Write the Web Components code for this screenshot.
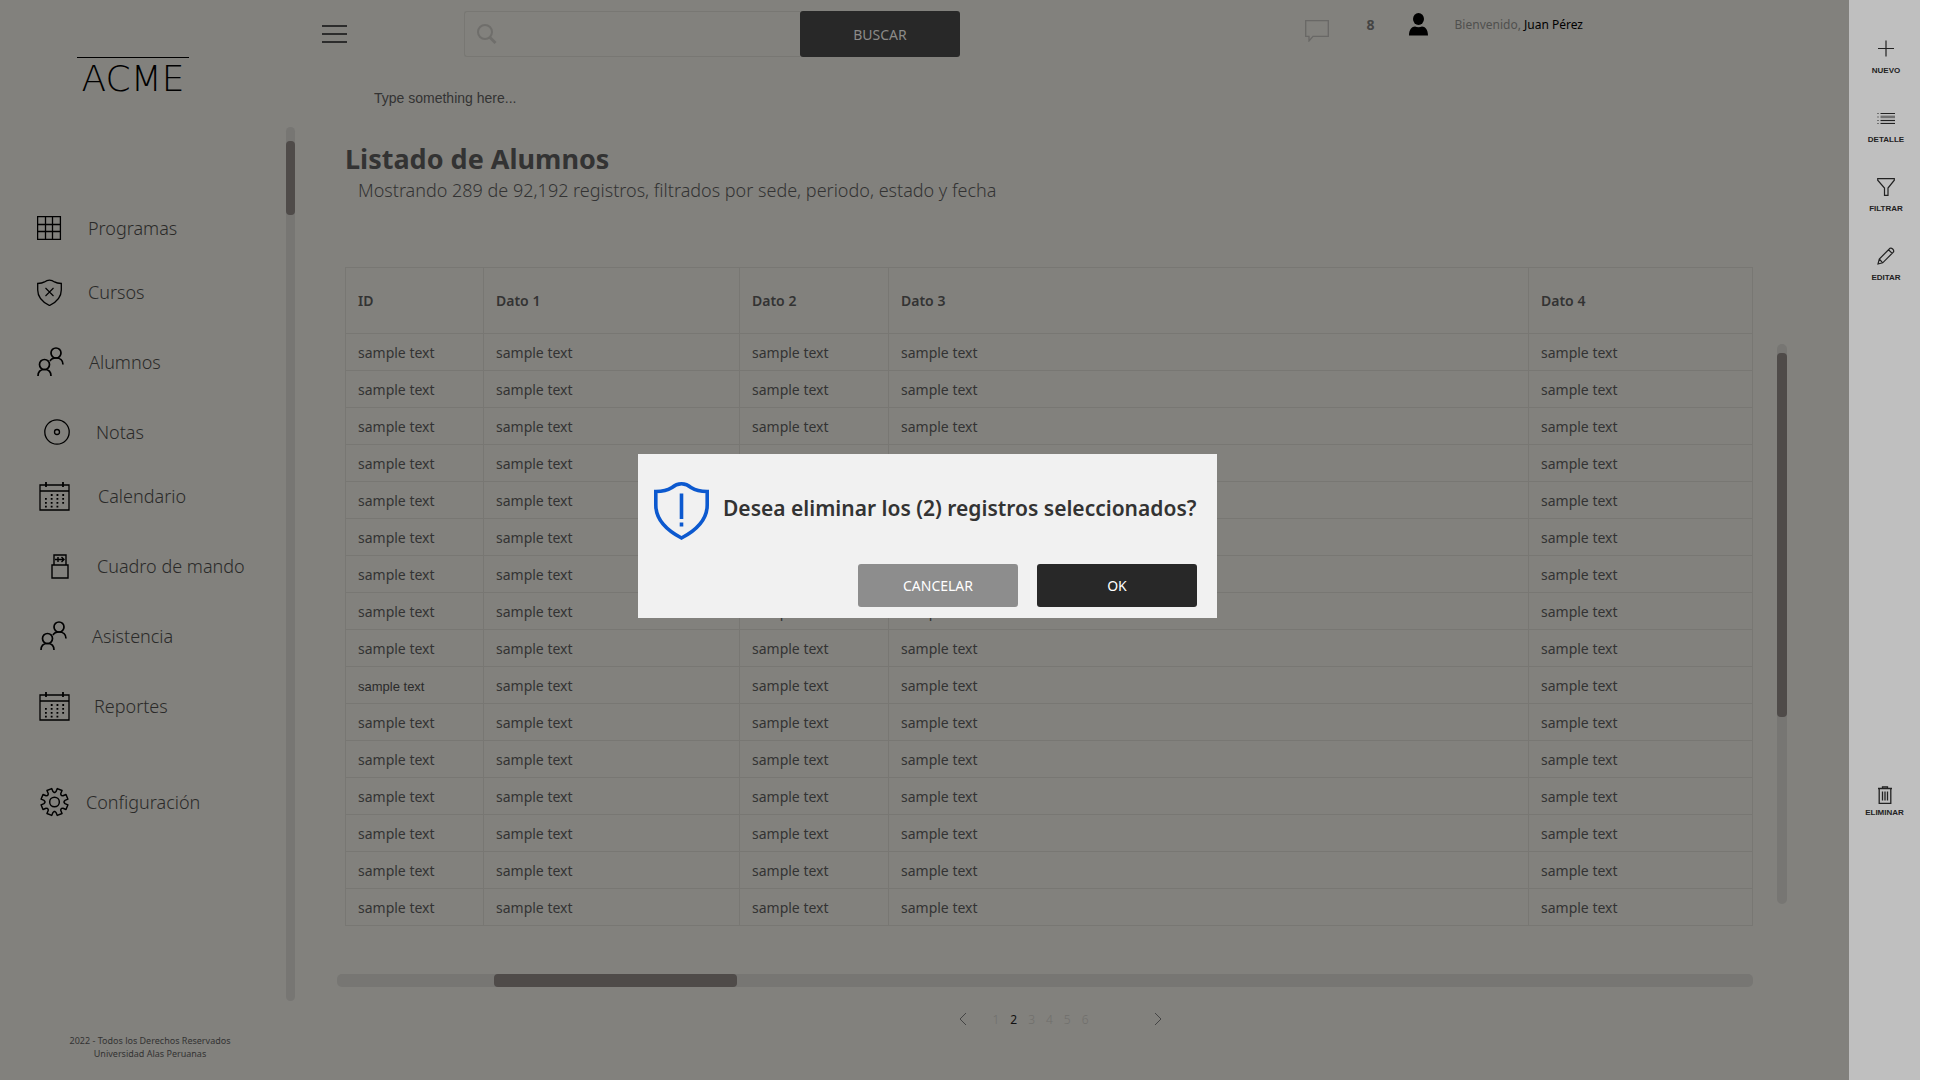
<!DOCTYPE html>
<html lang="es">
<head>
<meta charset="utf-8">
<title>Listado de Alumnos</title>
<style>
  :root {
    --page: #82817d;
    --line: #787773;
    --track: #777673;
    --thumb: #4f4b49;
    --ink: #333333;
    --dark: #282828;
  }
  body { margin: 0; background: #fff; font-family: "Noto Sans", "Open Sans", sans-serif; color: var(--ink); }
</style>
</head>
<body>
<app-shell>
  <side-menu slot="menu">
    <menu-item icon="grid">Programas</menu-item>
    <menu-item icon="shield" near>Cursos</menu-item>
    <menu-item icon="people">Alumnos</menu-item>
    <menu-item icon="disc" indent="2">Notas</menu-item>
    <menu-item icon="calendar-wide" indent="1" near>Calendario</menu-item>
    <menu-item icon="usb" indent="3">Cuadro de mando</menu-item>
    <menu-item icon="people" indent="1">Asistencia</menu-item>
    <menu-item icon="calendar" indent="1">Reportes</menu-item>
    <menu-item icon="gear" indent="1" apart>Configuración</menu-item>
  </side-menu>
  <top-bar slot="main"></top-bar>
  <student-list slot="main"></student-list>
  <page-nav slot="main"></page-nav>
  <action-rail slot="rail">
    <rail-action icon="plus">NUEVO</rail-action>
    <rail-action icon="list">DETALLE</rail-action>
    <rail-action icon="funnel">FILTRAR</rail-action>
    <rail-action icon="pencil">EDITAR</rail-action>
    <rail-action icon="trash" slot="low">ELIMINAR</rail-action>
  </action-rail>
  <confirm-dialog slot="overlay">Desea eliminar los (2) registros seleccionados?</confirm-dialog>
</app-shell>

<script>
const people = `<svg width="27" height="30" viewBox="0 0 27 30" fill="none" stroke="#000" stroke-width="1.7"><circle cx="19" cy="6" r="5"/><circle cx="7.500" cy="17.500" r="5"/><path d="M1 29c0-4 2.500-6.500 6.500-6.500S14 25 14 29M13 14c1-2 3.500-3 6-3 4 0 7 2.500 7 6.500"/></svg>`;
const calendar = w => `<svg width="${w}" height="29" viewBox="1 0 ${w} 29" overflow="visible" fill="none" stroke="#000" stroke-width="1.300"><path d="M1 3h29v25H1zM1 9h29"/><path d="M7 0v5M24 0v5" stroke-width="1.800"/><g stroke-width="1.800" stroke-dasharray="1.800 3.950"><path d="M11.800 13H26M6 16.900H26M6 20.800H26M6 24.700H19.500"/></g></svg>`;
const shieldPath = "M13 1.200c-2 0-3.500.6-5 1.700C6 4.200 4 4.500 1.200 4.500V11c0 7 4.500 12 11.800 15.500C20.300 23 24.800 18 24.800 11V4.500C22 4.500 20 4.200 18 2.900c-1.500-1.100-3-1.700-5-1.700z";
function gear() {
  let d = "";
  for (let i = 0; i < 8; i++) {
    const a = i * Math.PI / 4 + Math.PI / 8;
    [[-.34, 9.900], [-.25, 10.900], [-.19, 14.200], [.19, 14.200], [.25, 10.900], [.34, 9.900]].forEach(([o, r], k) => {
      d += (i + k ? "L" : "M") + (15 + r * Math.cos(a + o)).toFixed(1) + " " + (15 + r * Math.sin(a + o)).toFixed(1);
    });
  }
  return `<svg width="29" height="30" viewBox="0 0 30 30" fill="none" stroke="#000" stroke-width="1.500" stroke-linejoin="round"><path d="${d}z"/><circle cx="15" cy="15" r="5"/></svg>`;
}
const ICONS = {
  grid: `<svg width="26" height="24" viewBox="0 0 26 24" fill="none" stroke="#000" stroke-width="1.300"><path d="M.6.6h22.800v22.800H.6zM8.500 0v24M15.500 0v24M0 8.500h24M0 15.500h24"/></svg>`,
  shield: `<svg width="26" height="27" viewBox="0 0 26 27" fill="none" stroke="#000" stroke-width="1.300"><path transform="translate(-.5 0)" d="${shieldPath}"/><path d="M8.500 9l8 8M16.500 9l-8 8" stroke-width="1.100"/></svg>`,
  people,
  disc: `<svg width="27" height="26" viewBox="0 0 27 26" fill="none" stroke="#000" stroke-width="1.300"><circle cx="13" cy="13" r="12.200"/><circle cx="13" cy="13" r="2.500"/></svg>`,
  "calendar-wide": calendar(33),
  calendar: calendar(29),
  usb: `<svg width="21" height="25" viewBox="0 0 21 25" fill="none" stroke="#000" stroke-width="1.400"><path d="M3 11V1h12v10M1 11h16v13H1zM4 5.500h9M7 3v5M10.500 3l2.500 2.500L10.500 8"/></svg>`,
  gear: gear(),
  plus: `<svg width="18" height="18" viewBox="0 0 18 18" stroke="#222" stroke-width="1.200"><path d="M1 8.500h16M9 .5v16"/></svg>`,
  list: `<svg width="18" height="18" viewBox="0 0 18 18" stroke="#222" stroke-width="1.200"><path d="M3.500 4.500H18M3.500 8H18M3.500 11.500H18M3.500 14.500H18M.5 4.500h1M.5 8h1M.5 11.500h1M.5 14.500h1"/><path d="M3.500 6.500H18M3.500 10H18M3.500 13H18" stroke-opacity=".2"/></svg>`,
  funnel: `<svg width="18" height="18" viewBox="0 0 18 18" fill="none" stroke="#222" stroke-width="1.200"><path d="M.7.700h16.600v1.500L11 10v7.300H7.500V10L.7 2.200z"/></svg>`,
  pencil: `<svg width="18" height="18" viewBox="0 0 18 18" fill="none" stroke="#222" stroke-width="1.200"><path d="M1 17l1.300-5L13 1.300c1.500-1 4.500 1.500 3.500 3.700L5.700 15.800zM2.300 12l3.400 3.800M11.500 2.800l3.700 3.600"/></svg>`,
  trash: `<svg width="18" height="18" viewBox="0 0 18 18" fill="none" stroke="#222" stroke-width="1.300"><path d="M2 2.500h14M6.500 2.500V.8h5v1.700M3.200 2.500v14.800h11.600V2.500M6.500 5.500v9M9 5.500v9M11.500 5.500v9"/></svg>`
};

function define(name, render) {
  customElements.define(name, class extends HTMLElement {
    constructor() { super(); this.attachShadow({ mode: "open" }); }
    connectedCallback() { this.shadowRoot.innerHTML = render(this); }
  });
}

define("app-shell", () => `<style>
  :host { display: flex; min-height: 100vh; position: relative; margin-right: 22px; background: var(--page); }
  main { flex: 1; min-width: 0; display: flex; flex-direction: column; }
</style><slot name="menu"></slot><main><slot name="main"></slot></main><slot name="rail"></slot><slot name="overlay"></slot>`);

define("scroll-track", el => `<style>
  :host { display: flex; background: var(--track); border-radius: 5px; }
  :host([vertical]) { flex-direction: column; }
  i { flex: none; background: var(--thumb); border-radius: 4px; }
  :host([vertical]) i { height: ${el.getAttribute("size")}; margin-top: ${el.getAttribute("start")}; }
  :host(:not([vertical])) i { width: ${el.getAttribute("size")}; margin-left: ${el.getAttribute("start")}; }
</style><i></i>`);

define("brand-logo", () => `<style>
  :host { display: block; box-sizing: border-box; height: 127px; padding: 57px 0 0 77px; }
  div { width: 112px; border-top: 1px solid #000; color: #000;
    font: 200 36px/42px "DejaVu Sans Light", "DejaVu Sans ExtraLight", "DejaVu Sans", sans-serif; text-align: center; }
</style><div>ACME</div>`);

define("menu-item", el => `<style>
  :host { display: block; margin-top: 38px; }
  :host(:first-child) { margin-top: 0; }
  :host([near]) { margin-top: 32px; }
  :host([apart]) { margin-top: 64px; }
  a { display: flex; align-items: center; gap: 25px; height: 32px; padding-left: 37px; color: #2a2a29;
    font-size: 18px; font-weight: 300; text-decoration: none; white-space: nowrap; }
  :host([indent="1"]) a { padding-left: 40px; }
  :host([indent="2"]) a { padding-left: 44px; }
  :host([indent="3"]) a { padding-left: 51px; }
  :host([apart]) a { gap: 17px; }
  svg { flex: none; }
</style><a href="#">${ICONS[el.getAttribute("icon")]}<span><slot></slot></span></a>`);

define("side-menu", () => `<style>
  :host { display: flex; flex-direction: column; flex: none; width: 295px; }
  .body { flex: 1; display: flex; }
  nav { flex: 1; padding-top: 85px; }
  scroll-track { width: 9px; }
  footer { height: 79px; box-sizing: border-box; padding: 33px 0 0 5px; text-align: center; font-size: 9px; line-height: 13px; color: #333; }
</style><brand-logo></brand-logo>
<div class="body"><nav><slot></slot></nav><scroll-track vertical start="14px" size="74px"></scroll-track></div>
<footer>2022 - Todos los Derechos Reservados<br>Universidad Alas Peruanas</footer>`);

define("top-bar", () => `<style>
  :host { display: block; padding: 11px 266px 0 27px; }
  .row { display: flex; height: 46px; }
  button { font: inherit; border: 0; padding: 0; cursor: pointer; }
  .burger { background: none; width: 25px; display: flex; align-items: center; }
  form { display: flex; width: 496px; margin-left: 117px; }
  .field { flex: 1; display: flex; align-items: center; border: 1px solid var(--line); border-right: 0; border-radius: 3px 0 0 3px; padding-left: 12px; }
  input { flex: 1; min-width: 0; border: 0; background: none; outline: 0; font: 14px "Liberation Sans", sans-serif; }
  form button { width: 160px; background: var(--dark); color: #8c8b88; border-radius: 3px; font-size: 14px; }
  .user { display: flex; align-items: center; height: 27px; margin-left: auto; font-size: 12px; color: #50504e; }
  .user b { font-size: 14px; font-weight: 700; margin: 0 34px 0 38px; color: #444; }
  .user p { margin: 0 0 0 27px; }
  .user strong { font-weight: 400; color: #000; }
  .chat { margin-top: 12px; }
  label { display: block; margin: 31px 0 0 52px; font: 14px/20px "Liberation Sans", sans-serif; color: #333; }
</style>
<div class="row">
  <button class="burger" aria-label="Menú"><svg width="25" height="18" stroke="#2c2c2c" stroke-width="2"><path d="M0 1h25M0 9h25M0 17h25"/></svg></button>
  <form onsubmit="return false">
    <div class="field"><svg width="20" height="20" viewBox="0 0 20 20" fill="none" stroke="#6f6e6b" stroke-width="2"><circle cx="8" cy="8" r="7"/><path d="M12.500 13l6 6" stroke-width="2.800"/></svg><input id="q" type="text"></div>
    <button>BUSCAR</button>
  </form>
  <div class="user">
    <svg class="chat" width="24" height="22" viewBox="0 0 24 22" fill="none" stroke="#696866" stroke-width="1.300"><path d="M.7.700h22.600v15.600H8L4 21v-4.700H.7z"/></svg>
    <b>8</b>
    <svg width="19" height="23" viewBox="0 0 19 23"><ellipse cx="9.500" cy="6" rx="5.500" ry="6"/><path d="M0 22.500c0-6 3-9 6-9 2 1 5 1 7 0 3 0 6 3 6 9z"/></svg>
    <p>Bienvenido, <strong>Juan Pérez</strong></p>
  </div>
</div>
<label for="q">Type something here...</label>`);

define("student-list", () => {
  const rows = Array.from({ length: 16 }, (_, i) =>
    `<tr>${`<td${i === 9 ? ' class="plain"' : ""}>sample text</td>`}${"<td>sample text</td>".repeat(4)}</tr>`).join("");
  return `<style>
  :host { display: block; padding: 30px 62px 0 42px; }
  h1 { margin: 0 0 0 8px; font-size: 27px; line-height: 42px; font-weight: 700; }
  p { margin: 0 0 0 21px; font-size: 18px; line-height: 20px; font-weight: 300; }
  .grid { display: flex; gap: 24px; margin: 67px 0 0 8px; }
  table { flex: 1; width: 100%; border-collapse: collapse; table-layout: fixed; font-size: 14px; line-height: 20px; }
  th, td { border: 1px solid var(--line); padding: 0 12px; text-align: left; height: 37px; box-sizing: border-box; }
  td { font-weight: 400; padding-top: 2px; }
  th { height: 66px; font-weight: 600; }
  .plain { font: 13px "Liberation Sans", sans-serif; color: #2a2a2a; }
  .v { width: 10px; margin: 77px 0 22px; }
  .h { height: 13px; margin: 48px 34px 0 0; }
</style>
<h1>Listado de Alumnos</h1>
<p>Mostrando 289 de 92,192 registros, filtrados por sede, periodo, estado y fecha</p>
<div class="grid"><table>
<colgroup><col style="width:138px"><col style="width:256px"><col style="width:149px"><col><col style="width:224px"></colgroup>
<thead><tr><th>ID</th><th>Dato 1</th><th>Dato 2</th><th>Dato 3</th><th>Dato 4</th></tr></thead>
<tbody>${rows}</tbody></table><scroll-track class="v" vertical start="9px" size="65%"></scroll-track></div>
<scroll-track class="h" start="157px" size="243px"></scroll-track>`;
});

define("page-nav", () => `<style>
  :host { display: flex; align-items: center; justify-content: center; height: 24px; margin-top: 20px; padding-right: 23px; font-size: 12px; }
  button { border: 0; padding: 0; background: none; display: flex; width: 8px; }
  ol { display: flex; list-style: none; gap: 11px; margin: 0 65px 0 25px; padding: 0; }
  a { color: #706f6c; text-decoration: none; font-weight: 300; }
  a[aria-current] { color: #111; font-weight: 400; }
</style>
<button aria-label="Anterior"><svg width="8" height="12" fill="none" stroke="#444"><path d="M7 0L1 6l6 6"/></svg></button>
<ol><li><a href="#">1</a></li><li><a href="#" aria-current="page">2</a></li><li><a href="#">3</a></li><li><a href="#">4</a></li><li><a href="#">5</a></li><li><a href="#">6</a></li></ol>
<button aria-label="Siguiente"><svg width="8" height="12" fill="none" stroke="#444"><path d="M1 0l6 6-6 6"/></svg></button>`);

define("rail-action", el => `<style>
  :host { display: block; }
  button { display: flex; flex-direction: column; align-items: center; gap: 8px; width: 100%; padding: 0; border: 0; background: none;
    color: #222; font: 700 8px/10px "Liberation Sans", sans-serif; }
  :host([slot]) button { gap: 4px; }
</style><button>${ICONS[el.getAttribute("icon")]}<span><slot></slot></span></button>`);

define("action-rail", () => `<style>
  :host { display: flex; flex-direction: column; box-sizing: border-box; flex: none; width: 71px; padding: 40px 0 262px; background: #bfbfbf; }
  div { display: flex; flex-direction: column; gap: 33px; padding-left: 3px; }
  .low { margin-top: auto; padding: 0; }
</style><div><slot></slot></div><div class="low"><slot name="low"></slot></div>`);

define("confirm-dialog", () => `<style>
  :host { position: absolute; inset: 0 71px 0 0; display: flex; align-items: center; justify-content: center; padding: 0 0 8px 6px; }
  dialog { position: static; margin: 0; box-sizing: border-box; width: 579px; border: 0; padding: 28px 20px 11px 16px; background: #f1f1f1; color: var(--ink); }
  .ask { display: flex; align-items: center; gap: 14px; }
  svg { flex: none; }
  h2 { margin: 0; font-size: 21px; line-height: 28px; font-weight: 600; white-space: nowrap; padding-bottom: 6px; }
  .acts { display: flex; justify-content: flex-end; gap: 19px; margin-top: 24px; }
  button { width: 160px; height: 43px; border: 0; border-radius: 3px; font: inherit; font-size: 14px; color: #fff; background: var(--dark); }
  .no { background: #8d8d8d; }
</style>
<dialog open aria-labelledby="t">
  <div class="ask"><svg width="55" height="58" viewBox="0 0 55 58" fill="none" stroke="#0c59cf" stroke-width="3.600"><path d="M27.500 1.800c-4.500 0-7 1.500-10 4C13.500 8.500 8.500 9.500 1.800 9.500V23c0 13.500 8.500 24 25.700 33C44.700 47 53.200 36.500 53.200 23V9.500c-6.700 0-11.700-1-15.700-3.700-3-2.500-5.500-4-10-4zM27.500 11.500v25.500M27.500 40.500v4"/></svg>
  <h2 id="t"><slot></slot></h2></div>
  <div class="acts"><button class="no">CANCELAR</button><button>OK</button></div>
</dialog>`);
</script>
</body>
</html>
